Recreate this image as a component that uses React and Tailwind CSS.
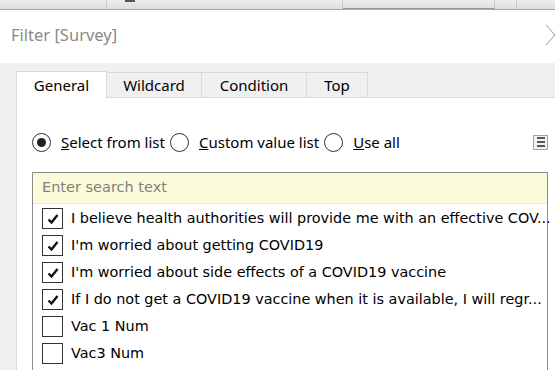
import React from 'react'

const items = [
  { label: 'I believe health authorities will provide me with an effective COV...', checked: true },
  { label: "I'm worried about getting COVID19", checked: true },
  { label: "I'm worried about side effects of a COVID19 vaccine", checked: true },
  { label: 'If I do not get a COVID19 vaccine when it is available, I will regr...', checked: true },
  { label: 'Vac 1 Num', checked: false },
  { label: 'Vac3 Num', checked: false },
]

const tabs = [
  { name: 'General', w: 'w-[91px]' },
  { name: 'Wildcard', w: 'w-[95px]' },
  { name: 'Condition', w: 'w-[105px]' },
  { name: 'Top', w: 'w-[61px]' },
]

function Radio({ on }) {
  return (
    <span className="w-[19px] h-[19px] rounded-full border border-[#333] flex items-center justify-center bg-white shrink-0">
      {on && <span className="w-[9px] h-[9px] rounded-full bg-[#222]" />}
    </span>
  )
}

function Check({ on }) {
  return (
    <span className="w-[21px] h-[21px] border border-[#333] bg-white flex items-center justify-center shrink-0">
      {on && (
        <svg width="14" height="14" viewBox="0 0 14 14">
          <path d="M2.5 7.5 L5.5 10.5 L11.5 3" fill="none" stroke="#111" strokeWidth="2.4" />
        </svg>
      )}
    </span>
  )
}

export default function App() {
  return (
    <div className="w-[555px] h-[370px] overflow-hidden relative bg-white" style={{ fontFamily: '"Noto Sans", sans-serif' }}>
      {/* app toolbar strip behind the dialog */}
      <div className="h-[10px] flex bg-gradient-to-b from-[#eeeeee] to-[#dedede] border-b border-[#a8a8a8]">
        <div className="w-[107px] border-r border-[#c8c8c8]" />
        <div className="w-[236px] border-r border-[#c8c8c8] relative">
          <span className="absolute left-[18px] top-0 w-[10px] h-[2px] bg-[#555]" />
        </div>
        <div className="w-[152px] border-r border-[#c8c8c8] border-b border-b-[#999]" />
        <div className="w-[22px] border-r border-[#c8c8c8]" />
        <div className="flex-1" />
      </div>

      {/* title */}
      <div className="h-[53px] flex items-center pl-[11px] relative">
        <span className="text-[16.5px] text-[#8a8a8a] pb-[2px]">Filter [Survey]</span>
        <svg className="absolute left-[545px] top-[14px]" width="12" height="22" viewBox="0 0 12 22">
          <path d="M1 1 L10 11 L1 21" fill="none" stroke="#9a9a9a" strokeWidth="1" />
        </svg>
      </div>

      {/* dialog body */}
      <div className="bg-[#f0f0f0] h-[307px] pl-[16px] pt-[8px]">
        <div className="flex h-[26px] items-end">
          {tabs.map((t, i) => (
            <div
              key={t.name}
              className={
                i === 0
                  ? `${t.w} h-[27px] bg-white border border-[#d9d9d9] border-b-0 flex items-center justify-center text-[15px] text-black relative z-10 -mb-px`
                  : `${t.w} h-[25px] bg-[#f0f0f0] border border-l-0 border-[#d9d9d9] border-b-0 flex items-center justify-center text-[15px] text-black`
              }
            >
              {t.name}
            </div>
          ))}
        </div>

        <div className="bg-white border-l border-t border-[#d9d9d9] h-[300px] pl-[15px] pt-[33px]">
          <div className="w-[516px] flex items-center h-[22px] text-[15px] text-black">
            <Radio on />
            <span className="ml-[10px] mr-[5px]"><u>S</u>elect from list</span>
            <Radio />
            <span className="ml-[10px] mr-[5px]"><u>C</u>ustom value list</span>
            <Radio />
            <span className="ml-[10px]"><u>U</u>se all</span>
            <span className="ml-auto w-[15px] h-[15px] border border-[#a0a0a0] bg-[#f4f4f4] flex flex-col items-center justify-center gap-[2px]">
              <span className="w-[8px] h-[2px] bg-[#555]" />
              <span className="w-[8px] h-[2px] bg-[#555]" />
              <span className="w-[8px] h-[2px] bg-[#555]" />
            </span>
          </div>

          <div className="mt-[19px] w-[516px] border border-[#8c8c8c] h-[240px]" style={{ fontFamily: 'Tahoma, "DejaVu Sans", sans-serif' }}>
            <div className="h-[31px] bg-[#fcfbd9] border-b border-[#e6e6e6] flex items-center pl-[9px] text-[14.5px] text-[#808080]">
              Enter search text
            </div>
            <div className="pt-[1px]">
              {items.map((it) => (
                <div key={it.label} className="h-[27px] flex items-center pl-[9px] text-[14.4px] text-black whitespace-nowrap">
                  <Check on={it.checked} />
                  <span className="ml-[8px]">{it.label}</span>
                </div>
              ))}
            </div>
          </div>
        </div>
      </div>
    </div>
  )
}
